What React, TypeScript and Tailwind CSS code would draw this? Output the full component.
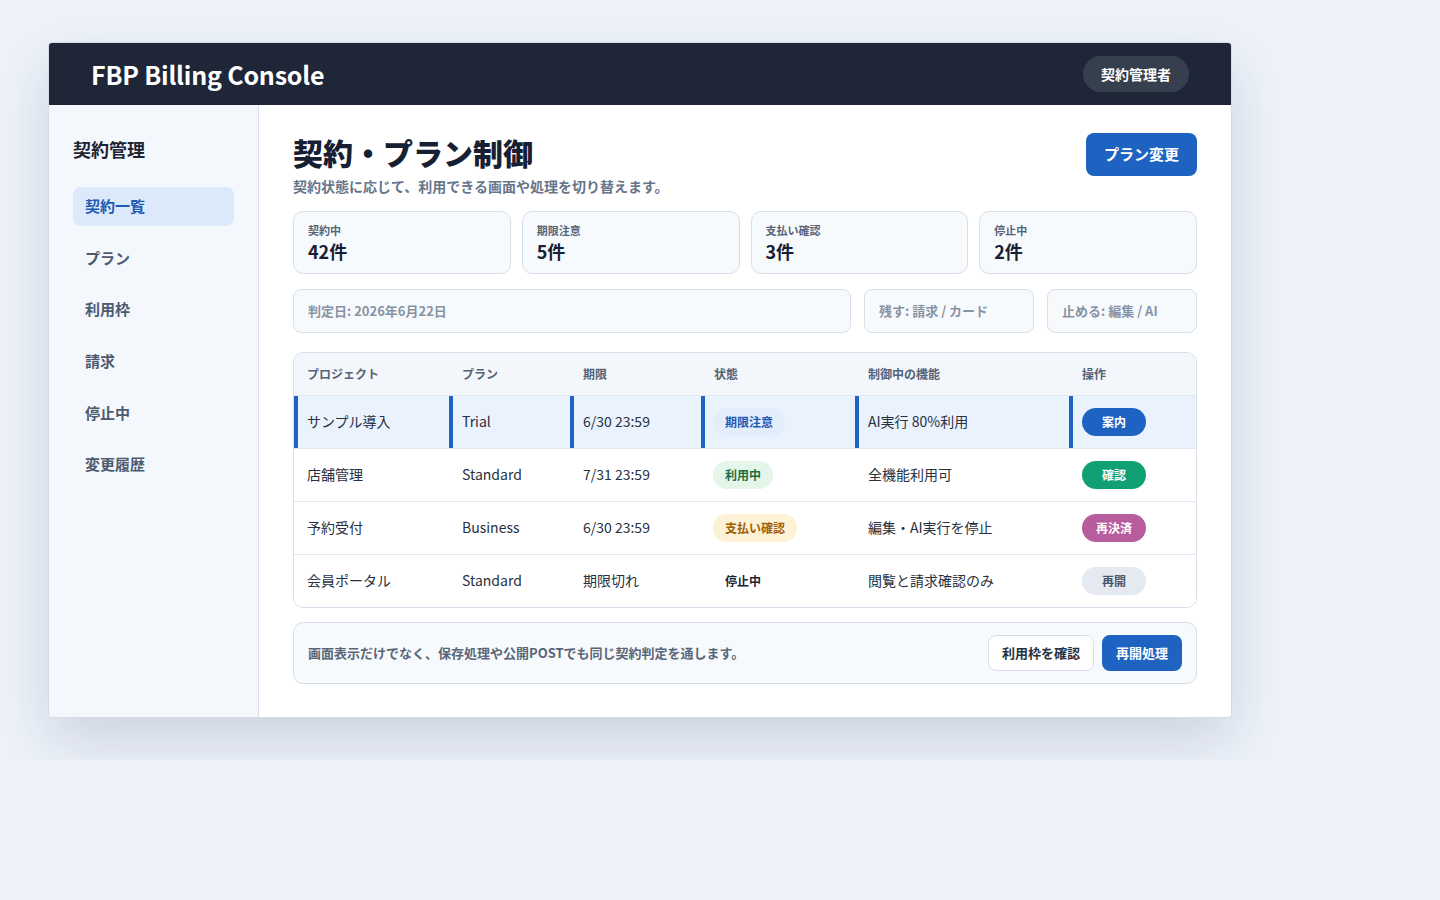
import React from "react";

const font = { fontFamily: '"Noto Sans CJK JP", "Noto Sans", sans-serif' };

type Row = {
  project: string;
  plan: string;
  limit: string;
  status: string;
  statusCls: string;
  feature: string;
  action: string;
  actionCls: string;
  selected?: boolean;
};

const rows: Row[] = [
  {
    project: "サンプル導入",
    plan: "Trial",
    limit: "6/30 23:59",
    status: "期限注意",
    statusCls: "bg-[#e3edfb] text-[#1d5bb5]",
    feature: "AI実行 80%利用",
    action: "案内",
    actionCls: "bg-[#1e63c2] text-white",
    selected: true,
  },
  {
    project: "店舗管理",
    plan: "Standard",
    limit: "7/31 23:59",
    status: "利用中",
    statusCls: "bg-[#e4f5ea] text-[#18703f]",
    feature: "全機能利用可",
    action: "確認",
    actionCls: "bg-[#10a074] text-white",
  },
  {
    project: "予約受付",
    plan: "Business",
    limit: "6/30 23:59",
    status: "支払い確認",
    statusCls: "bg-[#fdf1d6] text-[#a05f06]",
    feature: "編集・AI実行を停止",
    action: "再決済",
    actionCls: "bg-[#b75c9d] text-white",
  },
  {
    project: "会員ポータル",
    plan: "Standard",
    limit: "期限切れ",
    status: "停止中",
    statusCls: "bg-transparent text-[#1c2433]",
    feature: "閲覧と請求確認のみ",
    action: "再開",
    actionCls: "bg-[#e5eaf2] text-[#4a586c]",
  },
];

const stats = [
  { label: "契約中", value: "42件" },
  { label: "期限注意", value: "5件" },
  { label: "支払い確認", value: "3件" },
  { label: "停止中", value: "2件" },
];

const nav = ["契約一覧", "プラン", "利用枠", "請求", "停止中", "変更履歴"];

export default function App() {
  return (
    <div className="min-h-screen w-full bg-[#eef3fb]" style={font}>
      <div className="w-[1280px] h-[760px] overflow-hidden px-12 pt-[42px]">
        <div className="w-[1184px] bg-white rounded-[4px] border border-[#d5dce6] shadow-[0_24px_60px_rgba(30,45,70,0.16)] overflow-hidden flex flex-col">
          <header className="h-[62px] bg-[#1e2637] flex items-center justify-between pl-[42px] pr-[42px]">
            <div className="text-white text-[25px] font-bold tracking-[-0.2px] leading-none">
              FBP Billing Console
            </div>
            <div className="h-[36px] px-[18px] rounded-full bg-[#363f4e] text-white text-[14px] font-bold flex items-center">
              契約管理者
            </div>
          </header>
          <div className="flex">
            <aside className="w-[210px] shrink-0 bg-[#f4f7fc] border-r border-[#d8dfe9] px-6 pt-[30px]">
              <div className="text-[18px] leading-[28px] font-bold text-[#1c2433]">契約管理</div>
              <nav className="mt-[24px] flex flex-col gap-[12.6px]">
                {nav.map((n, i) => (
                  <div
                    key={n}
                    className={
                      i === 0
                        ? "h-[39px] rounded-lg bg-[#dbe9fb] px-3 flex items-center text-[15px] font-bold text-[#1d5bb5]"
                        : "h-[39px] rounded-lg px-3 flex items-center text-[15px] font-bold text-[#4d5b70]"
                    }
                  >
                    {n}
                  </div>
                ))}
              </nav>
            </aside>
            <main className="flex-1 px-[34px] pt-[28px] pb-[33px]">
              <div className="flex items-start justify-between">
                <div>
                  <h1 className="text-[30px] leading-[38px] font-extrabold text-[#172033]">契約・プラン制御</h1>
                  <p className="mt-[5px] text-[14px] leading-[20px] font-bold text-[#66758a]">
                    契約状態に応じて、利用できる画面や処理を切り替えます。
                  </p>
                </div>
                <button className="h-[43px] px-[18px] rounded-lg bg-[#1e63c2] text-white text-[15px] font-bold">
                  プラン変更
                </button>
              </div>

              <div className="mt-[15px] grid grid-cols-4 gap-[11px]">
                {stats.map((s) => (
                  <div
                    key={s.label}
                    className="h-[63px] rounded-[10px] border border-[#d6dfea] bg-[#f7fafd] px-[14px] pt-[10px]"
                  >
                    <div className="text-[11px] leading-[16px] font-bold text-[#556378]">{s.label}</div>
                    <div className="text-[18px] leading-[26px] font-bold text-[#172033]">{s.value}</div>
                  </div>
                ))}
              </div>

              <div className="mt-[15px] flex gap-[13px]">
                <div className="h-[44px] flex-1 rounded-[8px] border border-[#d6dfea] bg-[#f7fafd] px-[14px] flex items-center text-[13px] font-bold text-[#8793a5]">
                  判定日: 2026年6月22日
                </div>
                <div className="h-[44px] w-[170px] rounded-[8px] border border-[#d6dfea] bg-[#f7fafd] px-[14px] flex items-center text-[13px] font-bold text-[#8793a5]">
                  残す: 請求 / カード
                </div>
                <div className="h-[44px] w-[150px] rounded-[8px] border border-[#d6dfea] bg-[#f7fafd] px-[14px] flex items-center text-[13px] font-bold text-[#8793a5]">
                  止める: 編集 / AI
                </div>
              </div>

              <div className="mt-[19px] rounded-[10px] border border-[#d6dfea] overflow-hidden">
                <table className="w-full table-fixed border-collapse">
                  <colgroup>
                    <col className="w-[155px]" />
                    <col className="w-[121px]" />
                    <col className="w-[131px]" />
                    <col className="w-[154px]" />
                    <col className="w-[214px]" />
                    <col />
                  </colgroup>
                  <thead>
                    <tr className="h-[42px] bg-[#f3f6fa] border-b border-[#e1e7ef]">
                      {["プロジェクト", "プラン", "期限", "状態", "制御中の機能", "操作"].map((h) => (
                        <th key={h} className="text-left pl-[13px] text-[12px] font-bold text-[#556378]">
                          {h}
                        </th>
                      ))}
                    </tr>
                  </thead>
                  <tbody>
                    {rows.map((r, i) => {
                      const td = r.selected
                        ? "pl-[13px] shadow-[inset_4px_0_0_#1e63c2]"
                        : "pl-[13px]";
                      return (
                        <tr
                          key={r.project}
                          className={
                            (r.selected ? "bg-[#eaf2fd] " : "bg-white ") +
                            (i < rows.length - 1 ? "border-b border-[#e1e7ef] " : "") +
                            "h-[53px] text-[14px] text-[#273141]"
                          }
                        >
                          <td className={td}>{r.project}</td>
                          <td className={td}>{r.plan}</td>
                          <td className={td}>{r.limit}</td>
                          <td className={r.selected ? "pl-[12px] shadow-[inset_4px_0_0_#1e63c2]" : "pl-[12px]"}>
                            <span
                              className={
                                "inline-flex h-[28px] items-center rounded-full px-[12px] text-[12px] font-bold " +
                                r.statusCls
                              }
                            >
                              {r.status}
                            </span>
                          </td>
                          <td className={td}>{r.feature}</td>
                          <td className={td}>
                            <span
                              className={
                                "inline-flex h-[28px] w-[64px] items-center justify-center rounded-full text-[12px] font-bold " +
                                r.actionCls
                              }
                            >
                              {r.action}
                            </span>
                          </td>
                        </tr>
                      );
                    })}
                  </tbody>
                </table>
              </div>

              <div className="mt-[14px] h-[62px] rounded-[10px] border border-[#d6dfea] bg-[#f7fafd] pl-[14px] pr-[14px] flex items-center justify-between">
                <div className="text-[13px] font-bold text-[#5a6678]">
                  画面表示だけでなく、保存処理や公開POSTでも同じ契約判定を通します。
                </div>
                <div className="flex gap-[8px]">
                  <button className="h-[36px] px-[13px] rounded-[8px] border border-[#d6dfea] bg-white text-[13px] font-bold text-[#273141]">
                    利用枠を確認
                  </button>
                  <button className="h-[36px] px-[14px] rounded-[8px] bg-[#1e63c2] text-[13px] font-bold text-white">
                    再開処理
                  </button>
                </div>
              </div>
            </main>
          </div>
        </div>
      </div>
    </div>
  );
}
